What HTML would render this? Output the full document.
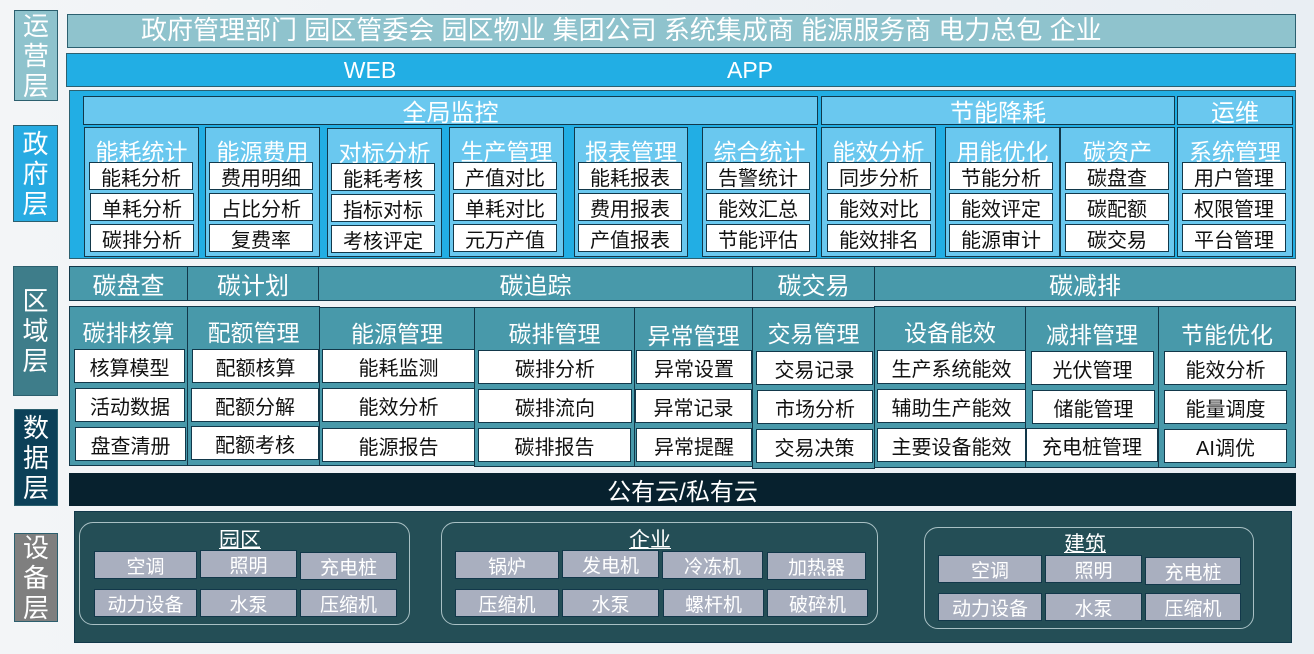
<!DOCTYPE html>
<html><head><meta charset="utf-8"><style>
*{margin:0;padding:0;box-sizing:border-box}
body{width:1314px;height:654px;position:relative;overflow:hidden;background:linear-gradient(90deg,#f3f5f7,#e9eef3);font-family:"Liberation Sans","Noto Sans CJK SC",sans-serif}
div{position:absolute}
.c{display:flex;align-items:center;justify-content:center;white-space:nowrap}
.lab{color:#fff;font-size:26px;line-height:30px;text-align:center;border:1.5px solid #2c5f6e;display:flex;flex-direction:column;align-items:center;justify-content:center}
.hd{background:#6ac8ef;border:1.5px solid #12384a;color:#fff;font-size:24px}
.col{background:#6ac8ef;border:1.5px solid #12384a}
.ct{left:0;right:0;top:5px;text-align:center;color:#fff;font-size:23px}
.it{background:#fff;border:1.5px solid #12384a;color:#111;font-size:20px;height:28px}
.ah{background:#4899aa;border:1.5px solid #12384a;color:#fff;font-size:24px}
.ac{background:#4899aa;border:1.5px solid #12384a}
.at{left:0;right:0;top:7px;text-align:center;color:#fff;font-size:23px}
.ai{background:#fff;border:1.5px solid #12384a;color:#111;font-size:20px;height:34px}
.grp{border:1.5px solid #a9c0c4;border-radius:14px}
.gt{color:#fff;font-size:21px;text-decoration:underline;text-decoration-thickness:1px}
.di{background:#a9afbf;border:1.5px solid #12384a;color:#fff;font-size:19px;height:28px}
</style></head><body>
<div class="lab" style="left:14px;top:10px;width:44px;height:91px;background:#8fc3cd">运<br>营<br>层</div>
<div class="lab" style="left:13px;top:125px;width:45px;height:97px;background:#27abe2">政<br>府<br>层</div>
<div class="lab" style="left:13px;top:266px;width:45px;height:130px;background:#3e7d8a">区<br>域<br>层</div>
<div class="lab" style="left:14px;top:409px;width:44px;height:97px;background:#0c4058">数<br>据<br>层</div>
<div class="lab" style="left:14px;top:533px;width:44px;height:89px;background:#7f7f7f">设<br>备<br>层</div>

<div style="left:67px;top:14px;width:1229px;height:34px;background:#8fc3cd;border:1.5px solid #2c6070;color:#fff;font-size:26px;line-height:31px;padding-left:73px;white-space:nowrap">政府管理部门 园区管委会 园区物业 集团公司 系统集成商 能源服务商 电力总包 企业</div>
<div style="left:66px;top:53px;width:1230px;height:34px;background:#22aee4;border:1.5px solid #2c6070"></div>
<div class="c" style="left:330px;top:55px;width:80px;height:30px;color:#fff;font-size:23px">WEB</div>
<div class="c" style="left:710px;top:55px;width:80px;height:30px;color:#fff;font-size:23px">APP</div>

<div style="left:69px;top:90px;width:1227px;height:169px;background:#22aee4;border:1.5px solid #2c6070"></div>
<div class="hd c" style="left:83px;top:96px;width:735px;height:29px">全局监控</div>
<div class="hd c" style="left:821px;top:96px;width:354px;height:29px">节能降耗</div>
<div class="hd c" style="left:1177px;top:96px;width:116px;height:29px">运维</div>

<div class="col" style="left:84px;top:127px;width:115px;height:130px"><div class="ct">能耗统计</div><div class="it c" style="left:4px;top:34px;width:104px">能耗分析</div><div class="it c" style="left:5px;top:65px;width:104px">单耗分析</div><div class="it c" style="left:5px;top:96px;width:104px">碳排分析</div></div>
<div class="col" style="left:205px;top:127px;width:115px;height:130px"><div class="ct">能源费用</div><div class="it c" style="left:3px;top:34px;width:104px">费用明细</div><div class="it c" style="left:3px;top:65px;width:104px">占比分析</div><div class="it c" style="left:3px;top:96px;width:104px">复费率</div></div>
<div class="col" style="left:327px;top:128px;width:115px;height:129px"><div class="ct">对标分析</div><div class="it c" style="left:3px;top:34px;width:104px">能耗考核</div><div class="it c" style="left:3px;top:65px;width:104px">指标对标</div><div class="it c" style="left:3px;top:96px;width:104px">考核评定</div></div>
<div class="col" style="left:449px;top:127px;width:115px;height:130px"><div class="ct">生产管理</div><div class="it c" style="left:3px;top:34px;width:104px">产值对比</div><div class="it c" style="left:3px;top:65px;width:104px">单耗对比</div><div class="it c" style="left:3px;top:96px;width:104px">元万产值</div></div>
<div class="col" style="left:574px;top:127px;width:114px;height:130px"><div class="ct">报表管理</div><div class="it c" style="left:3px;top:34px;width:104px">能耗报表</div><div class="it c" style="left:3px;top:65px;width:104px">费用报表</div><div class="it c" style="left:3px;top:96px;width:104px">产值报表</div></div>
<div class="col" style="left:702px;top:127px;width:115px;height:130px"><div class="ct">综合统计</div><div class="it c" style="left:3px;top:34px;width:104px">告警统计</div><div class="it c" style="left:3px;top:65px;width:104px">能效汇总</div><div class="it c" style="left:3px;top:96px;width:104px">节能评估</div></div>
<div class="col" style="left:821px;top:127px;width:115px;height:130px"><div class="ct">能效分析</div><div class="it c" style="left:5px;top:34px;width:104px">同步分析</div><div class="it c" style="left:5px;top:65px;width:104px">能效对比</div><div class="it c" style="left:5px;top:96px;width:104px">能效排名</div></div>
<div class="col" style="left:945px;top:127px;width:115px;height:130px"><div class="ct">用能优化</div><div class="it c" style="left:3px;top:34px;width:104px">节能分析</div><div class="it c" style="left:3px;top:65px;width:104px">能效评定</div><div class="it c" style="left:3px;top:96px;width:104px">能源审计</div></div>
<div class="col" style="left:1060px;top:127px;width:115px;height:130px"><div class="ct">碳资产</div><div class="it c" style="left:4px;top:34px;width:104px">碳盘查</div><div class="it c" style="left:4px;top:65px;width:104px">碳配额</div><div class="it c" style="left:4px;top:96px;width:104px">碳交易</div></div>
<div class="col" style="left:1177px;top:127px;width:116px;height:130px"><div class="ct">系统管理</div><div class="it c" style="left:4px;top:34px;width:104px">用户管理</div><div class="it c" style="left:4px;top:65px;width:104px">权限管理</div><div class="it c" style="left:4px;top:96px;width:104px">平台管理</div></div>

<div class="ah c" style="left:69px;top:266px;width:119px;height:35px">碳盘查</div>
<div class="ah c" style="left:187px;top:266px;width:132px;height:35px">碳计划</div>
<div class="ah c" style="left:318px;top:266px;width:435px;height:35px">碳追踪</div>
<div class="ah c" style="left:752px;top:266px;width:123px;height:35px">碳交易</div>
<div class="ah c" style="left:874px;top:266px;width:422px;height:35px">碳减排</div>

<div class="ac" style="left:69px;top:306px;width:119px;height:160px"><div class="at">碳排核算</div><div class="ai c" style="left:4px;top:42px;width:111px">核算模型</div><div class="ai c" style="left:5px;top:81px;width:110px">活动数据</div><div class="ai c" style="left:5px;top:120px;width:111px">盘查清册</div></div>
<div class="ac" style="left:187px;top:306px;width:133px;height:160px"><div class="at">配额管理</div><div class="ai c" style="left:4px;top:42px;width:127px">配额核算</div><div class="ai c" style="left:3px;top:81px;width:128px">配额分解</div><div class="ai c" style="left:3px;top:119px;width:128px">配额考核</div></div>
<div class="ac" style="left:319px;top:307px;width:156px;height:159px"><div class="at">能源管理</div><div class="ai c" style="left:2px;top:41px;width:153px">能耗监测</div><div class="ai c" style="left:2px;top:80px;width:153px">能效分析</div><div class="ai c" style="left:2px;top:120px;width:153px">能源报告</div></div>
<div class="ac" style="left:474px;top:307px;width:161px;height:160px"><div class="at">碳排管理</div><div class="ai c" style="left:3px;top:42px;width:154px">碳排分析</div><div class="ai c" style="left:3px;top:81px;width:154px">碳排流向</div><div class="ai c" style="left:3px;top:120px;width:153px">碳排报告</div></div>
<div class="ac" style="left:634px;top:307px;width:119px;height:160px"><div class="at" style="top:9px">异常管理</div><div class="ai c" style="left:1px;top:42px;width:116px">异常设置</div><div class="ai c" style="left:0px;top:81px;width:117px">异常记录</div><div class="ai c" style="left:1px;top:120px;width:116px">异常提醒</div></div>
<div class="ac" style="left:752px;top:307px;width:123px;height:162px"><div class="at">交易管理</div><div class="ai c" style="left:3px;top:43px;width:117px">交易记录</div><div class="ai c" style="left:4px;top:82px;width:116px">市场分析</div><div class="ai c" style="left:3px;top:121px;width:117px">交易决策</div></div>
<div class="ac" style="left:874px;top:306px;width:152px;height:162px"><div class="at">设备能效</div><div class="ai c" style="left:2px;top:43px;width:149px">生产系统能效</div><div class="ai c" style="left:2px;top:82px;width:149px">辅助生产能效</div><div class="ai c" style="left:2px;top:121px;width:149px">主要设备能效</div></div>
<div class="ac" style="left:1025px;top:306px;width:134px;height:162px"><div class="at" style="top:9px">减排管理</div><div class="ai c" style="left:5px;top:44px;width:123px">光伏管理</div><div class="ai c" style="left:6px;top:83px;width:123px">储能管理</div><div class="ai c" style="left:0px;top:121px;width:132px">充电桩管理</div></div>
<div class="ac" style="left:1158px;top:306px;width:138px;height:162px"><div class="at" style="top:9px">节能优化</div><div class="ai c" style="left:5px;top:44px;width:123px">能效分析</div><div class="ai c" style="left:5px;top:83px;width:123px">能量调度</div><div class="ai c" style="left:5px;top:122px;width:123px">AI调优</div></div>

<div class="c" style="left:69px;top:473px;width:1227px;height:33px;background:#07212e;color:#fff;font-size:24px">公有云/私有云</div>

<div style="left:74px;top:511px;width:1218px;height:132px;background:#244e56;border:1.5px solid #12384a"></div>
<div class="grp" style="left:79px;top:522px;width:331px;height:103px"></div>
<div class="gt c" style="left:200px;top:526px;width:80px;height:26px">园区</div>
<div class="di c" style="left:94px;top:551px;width:103px">空调</div>
<div class="di c" style="left:200px;top:550px;width:97px">照明</div>
<div class="di c" style="left:300px;top:552px;width:97px">充电桩</div>
<div class="di c" style="left:94px;top:589px;width:103px">动力设备</div>
<div class="di c" style="left:200px;top:589px;width:97px">水泵</div>
<div class="di c" style="left:300px;top:589px;width:97px">压缩机</div>

<div class="grp" style="left:441px;top:522px;width:437px;height:103px"></div>
<div class="gt c" style="left:620px;top:526px;width:60px;height:26px">企业</div>
<div class="di c" style="left:455px;top:551px;width:104px">锅炉</div>
<div class="di c" style="left:562px;top:550px;width:97px">发电机</div>
<div class="di c" style="left:662px;top:551px;width:101px">冷冻机</div>
<div class="di c" style="left:767px;top:552px;width:99px">加热器</div>
<div class="di c" style="left:455px;top:589px;width:104px">压缩机</div>
<div class="di c" style="left:562px;top:589px;width:97px">水泵</div>
<div class="di c" style="left:663px;top:589px;width:101px">螺杆机</div>
<div class="di c" style="left:767px;top:589px;width:101px">破碎机</div>

<div class="grp" style="left:924px;top:527px;width:330px;height:102px"></div>
<div class="gt c" style="left:1055px;top:530px;width:60px;height:26px">建筑</div>
<div class="di c" style="left:938px;top:555px;width:104px">空调</div>
<div class="di c" style="left:1045px;top:555px;width:97px">照明</div>
<div class="di c" style="left:1145px;top:557px;width:96px">充电桩</div>
<div class="di c" style="left:938px;top:593px;width:104px">动力设备</div>
<div class="di c" style="left:1045px;top:593px;width:97px">水泵</div>
<div class="di c" style="left:1145px;top:593px;width:96px">压缩机</div>
</body></html>
